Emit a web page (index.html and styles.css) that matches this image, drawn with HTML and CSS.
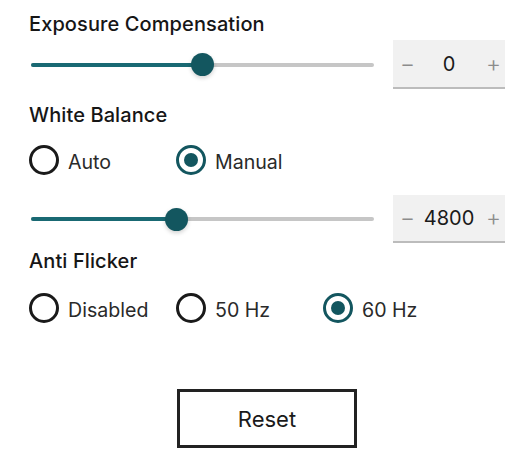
FILE: index.html
```html
<!DOCTYPE html>
<html lang="en">
<head>
<meta charset="utf-8">
<title>Camera Settings</title>
<link rel="stylesheet" href="styles.css">
</head>
<body>
<main class="panel">
  <h2 class="heading heading-first">Exposure Compensation</h2>
  <div class="slider-row slider-row-first">
    <div class="slider">
      <div class="track">
        <div class="fill" style="width:50%"></div>
        <div class="thumb" style="left:50%"></div>
      </div>
    </div>
    <div class="stepper">
      <span class="step">−</span>
      <span class="value">0</span>
      <span class="step">+</span>
    </div>
  </div>

  <h2 class="heading heading-second">White Balance</h2>
  <div class="radio-group radio-group-first">
    <label class="radio"><span class="dot"></span><span class="radio-text">Auto</span></label>
    <label class="radio"><span class="dot checked"></span><span class="radio-text">Manual</span></label>
  </div>
  <div class="slider-row slider-row-second">
    <div class="slider">
      <div class="track">
        <div class="fill" style="width:42.4%"></div>
        <div class="thumb" style="left:42.4%"></div>
      </div>
    </div>
    <div class="stepper">
      <span class="step">−</span>
      <span class="value">4800</span>
      <span class="step">+</span>
    </div>
  </div>

  <h2 class="heading heading-third">Anti Flicker</h2>
  <div class="radio-group radio-group-second">
    <label class="radio"><span class="dot"></span><span class="radio-text">Disabled</span></label>
    <label class="radio"><span class="dot"></span><span class="radio-text">50 Hz</span></label>
    <label class="radio"><span class="dot checked"></span><span class="radio-text">60 Hz</span></label>
  </div>

  <div class="actions">
    <button class="reset" type="button">Reset</button>
  </div>
</main>
</body>
</html>
```

FILE: styles.css
```css
* { box-sizing: border-box; }

html, body {
  margin: 0;
  padding: 0;
  background: #ffffff;
}

body {
  font-family: Inter, "Noto Sans", "Liberation Sans", sans-serif;
  color: #1a1a1a;
}

.panel {
  width: 520px;
  padding: 0 15px 0 29px;
  display: flex;
  flex-direction: column;
}

.heading {
  margin: 0;
  font-size: 20px;
  line-height: 24px;
  font-weight: 500;
  letter-spacing: 0.1px;
  color: #161616;
}

.heading-first { margin-top: 12px; }
.heading-second { margin-top: 14px; }
.heading-third { margin-top: 6px; }

.slider-row {
  display: flex;
  align-items: center;
  gap: 19px;
  padding-left: 2px;
}

.slider-row-first { margin-top: 4px; height: 49px; }
.slider-row-second { margin-top: 20px; height: 48px; }

.slider {
  flex: 1;
  display: flex;
  align-items: center;
}

.track {
  position: relative;
  width: 100%;
  height: 4px;
  border-radius: 2px;
  background: #c6c6c6;
}

.fill {
  height: 100%;
  border-radius: 2px;
  background: #196973;
}

.thumb {
  position: absolute;
  top: 50%;
  width: 23px;
  height: 23px;
  margin: -11.5px 0 0 -11.5px;
  border-radius: 50%;
  background: #13565f;
  box-shadow: 0 2px 4px rgba(0, 0, 0, 0.18);
}

.stepper {
  width: 112px;
  height: 100%;
  display: flex;
  align-items: center;
  padding: 0 7px;
  background: #f1f1f1;
  border-bottom: 2px solid #bcbcbc;
}

.step {
  color: #8c8c8c;
  width: 12px;
  text-align: center;
  font-size: 23px;
  font-weight: 300;
}

.value {
  flex: 1;
  text-align: center;
  font-size: 20px;
  color: #1a1a1a;
}

.radio-group {
  display: grid;
  grid-template-columns: 147px 147px 147px;
  height: 30px;
}

.radio-group-first { margin-top: 18px; }
.radio-group-second { margin-top: 20px; }

.radio {
  display: flex;
  align-items: center;
  gap: 9px;
  font-size: 19.6px;
  color: #2a2a2a;
}

.radio-text {
  padding-top: 3px;
}

.dot {
  position: relative;
  width: 30px;
  height: 30px;
  flex: none;
  border: 3px solid #1a1a1a;
  border-radius: 50%;
  background: #ffffff;
}

.dot.checked {
  border-color: #13565f;
}

.dot.checked::after {
  content: "";
  position: absolute;
  top: 5px;
  left: 5px;
  width: 14px;
  height: 14px;
  border-radius: 50%;
  background: #13565f;
}

.actions {
  display: flex;
  justify-content: center;
  margin-top: 66px;
}

.reset {
  width: 180px;
  height: 59px;
  border: 3px solid #222222;
  border-radius: 0;
  background: #ffffff;
  font-family: inherit;
  font-size: 22px;
  color: #1a1a1a;
  cursor: pointer;
}
```
